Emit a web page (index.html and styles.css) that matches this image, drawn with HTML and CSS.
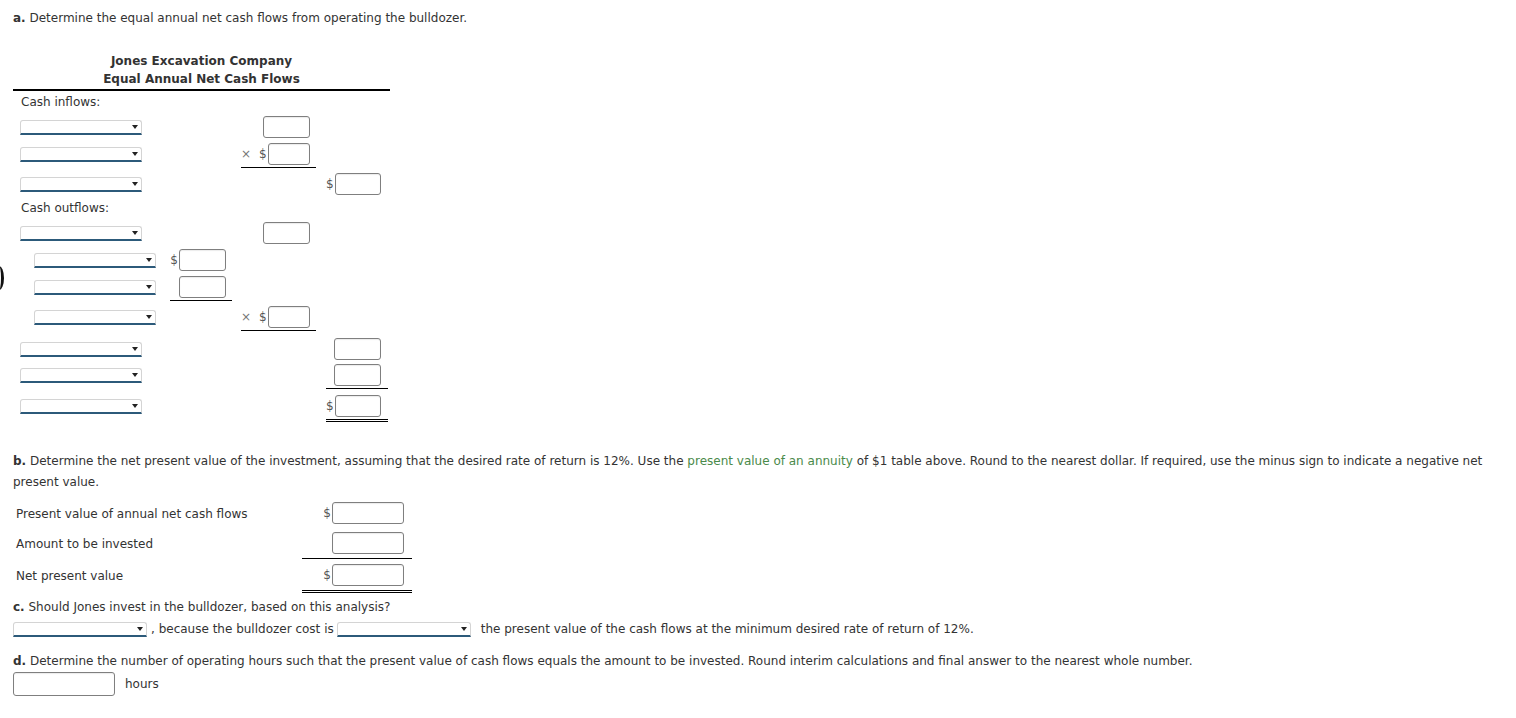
FILE: index.html
```html
<!DOCTYPE html>
<html>
<head>
<meta charset="utf-8">
<link rel="stylesheet" href="styles.css">
</head>
<body>
<div class="page">
  <span class="edge"></span>
  <p class="q qa"><b>a.</b> Determine the equal annual net cash flows from operating the bulldozer.</p>

  <div class="sheet">
    <div class="title">
      <div>Jones Excavation Company</div>
      <div>Equal Annual Net Cash Flows</div>
    </div>
    <div class="lbl">Cash inflows:</div>

    <div class="arow">
      <div class="c1"><span class="sel"></span></div>
      <div class="c3 cell"><span class="box"></span></div>
    </div>
    <div class="arow pb1">
      <div class="c1"><span class="sel"></span></div>
      <div class="c3 cell ul"><span class="x">×</span><span class="d">$</span><span class="box"></span></div>
    </div>
    <div class="arow pt4">
      <div class="c1"><span class="sel"></span></div>
      <div class="c4 cell"><span class="d">$</span><span class="box"></span></div>
    </div>

    <div class="lbl">Cash outflows:</div>

    <div class="arow">
      <div class="c1"><span class="sel"></span></div>
      <div class="c3 cell"><span class="box"></span></div>
    </div>
    <div class="arow">
      <div class="c1 ind"><span class="sel"></span></div>
      <div class="c2 cell"><span class="d">$</span><span class="box"></span></div>
    </div>
    <div class="arow pb1">
      <div class="c1 ind"><span class="sel"></span></div>
      <div class="c2 cell ul"><span class="box"></span></div>
    </div>
    <div class="arow pt4">
      <div class="c1 ind"><span class="sel"></span></div>
      <div class="c3 cell ul"><span class="x">×</span><span class="d">$</span><span class="box"></span></div>
    </div>
    <div class="arow pt5 pb1">
      <div class="c1"><span class="sel"></span></div>
      <div class="c4 cell"><span class="box"></span></div>
    </div>
    <div class="arow">
      <div class="c1"><span class="sel"></span></div>
      <div class="c4 cell ul"><span class="box"></span></div>
    </div>
    <div class="arow pt4">
      <div class="c1"><span class="sel"></span></div>
      <div class="c4 cell dul"><span class="d">$</span><span class="box"></span></div>
    </div>
  </div>

  <p class="q qb"><b>b.</b> Determine the net present value of the investment, assuming that the desired rate of return is 12%. Use the <span class="link">present value of an annuity</span> of $1 table above. Round to the nearest dollar. If required, use the minus sign to indicate a negative net present value.</p>

  <div class="npv">
    <div class="brow">
      <div class="blbl">Present value of annual net cash flows</div>
      <div class="bcell"><span class="d">$</span><span class="box wide"></span></div>
    </div>
    <div class="brow">
      <div class="blbl">Amount to be invested</div>
      <div class="bcell ul2"><span class="box wide"></span></div>
    </div>
    <div class="brow pt4">
      <div class="blbl">Net present value</div>
      <div class="bcell dul2"><span class="d">$</span><span class="box wide"></span></div>
    </div>
  </div>

  <p class="q qc"><b>c.</b> Should Jones invest in the bulldozer, based on this analysis?</p>
  <div class="crow">
    <span class="sel wsel"></span>
    <span class="ctext">, because the bulldozer cost is</span>
    <span class="sel wsel"></span>
    <span class="ctext tail">the present value of the cash flows at the minimum desired rate of return of 12%.</span>
  </div>

  <p class="q qd"><b>d.</b> Determine the number of operating hours such that the present value of cash flows equals the amount to be invested. Round interim calculations and final answer to the nearest whole number.</p>
  <div class="drow">
    <span class="box hbox"></span>
    <span class="hours">hours</span>
  </div>
</div>
</body>
</html>
```

FILE: styles.css
```css
* { box-sizing: border-box; }

html, body {
  margin: 0;
  padding: 0;
  background: #fff;
}

body {
  font-family: "DejaVu Sans", Verdana, sans-serif;
  font-size: 12px;
  color: #333;
}

.page {
  position: relative;
  padding: 8px 13px 20px 13px;
  width: 1516px;
}

.edge {
  position: absolute;
  left: -6px;
  top: 266px;
  width: 10px;
  height: 24px;
  border-right: 3px solid #111;
  border-radius: 50%;
}

.q {
  margin: 0;
  line-height: 21px;
}

.q b { color: #333; }

.link { color: #4a8a4a; }

/* ---------- part a ---------- */
.sheet {
  margin-top: 23px;
  width: 377px;
}

.title {
  text-align: center;
  font-weight: bold;
  line-height: 18px;
  border-bottom: 2px solid #000;
  padding-bottom: 1px;
}

.lbl {
  height: 22px;
  line-height: 22px;
  padding-left: 8px;
}

.arow {
  display: grid;
  grid-template-columns: 157px 62px 9px 75px 10px 62px;
  align-items: start;
  padding: 3px 0 2px 0;
}

.arow.pt4 { padding-top: 4px; }
.arow.pt5 { padding-top: 5px; }
.arow.pb1 { padding-bottom: 1px; }

.c1 {
  grid-column: 1;
  height: 22px;
  display: flex;
  align-items: center;
  padding-left: 7px;
}

.c1.ind { padding-left: 21px; }

.cell {
  height: 22px;
  box-sizing: content-box;
  display: flex;
  align-items: center;
  justify-content: flex-end;
}

.c2 { grid-column: 2; padding-right: 6px; }
.c3 { grid-column: 4; padding-right: 6px; }
.c4 { grid-column: 6; padding-right: 7px; }

.ul {
  padding-bottom: 2px;
  border-bottom: 1px solid #000;
}

.dul {
  padding-bottom: 2px;
  border-bottom: 3px double #000;
}

.sel {
  position: relative;
  display: inline-block;
  width: 122px;
  height: 15px;
  border: 1px solid #d4d4d4;
  border-bottom: 2px solid #2c5a7a;
  border-radius: 3px 3px 0 0;
  background: #fff;
}

.sel::after {
  content: "";
  position: absolute;
  right: 3px;
  top: 4px;
  border-left: 3.5px solid transparent;
  border-right: 3.5px solid transparent;
  border-top: 4px solid #222;
}

.box {
  display: inline-block;
  width: 47px;
  height: 22px;
  border: 1px solid #7f7f7f;
  border-radius: 3px;
  background: #fff;
  box-shadow: inset 0 1px 1px rgba(0,0,0,0.08);
}

.d {
  color: #555;
  margin-right: 1px;
}

.x {
  color: #777;
  margin-right: 8px;
}

/* ---------- part b ---------- */
.qb {
  margin-top: 27px;
}

.npv {
  padding-top: 6px;
}

.brow {
  display: grid;
  grid-template-columns: 289px 110px;
  align-items: start;
  padding: 3px 0 5px 0;
}

.brow.pt4 { padding-top: 4px; padding-bottom: 0; }

.blbl {
  height: 22px;
  line-height: 24px;
  padding-left: 3px;
}

.bcell {
  height: 22px;
  box-sizing: content-box;
  display: flex;
  align-items: center;
  justify-content: flex-end;
  padding-right: 8px;
}

.box.wide { width: 72px; }

.ul2 {
  padding-bottom: 4px;
  border-bottom: 1px solid #000;
}

.brow:has(.ul2) { padding-bottom: 1px; }

.dul2 {
  padding-bottom: 4px;
  border-bottom: 3px double #000;
}

/* ---------- part c ---------- */
.qc {
  margin-top: 4px;
}

.crow {
  display: flex;
  align-items: center;
  height: 22px;
}

.wsel {
  width: 134px;
}

.ctext {
  margin-left: 4px;
  margin-right: 3px;
}

.ctext.tail {
  margin-left: 10px;
}

/* ---------- part d ---------- */
.qd {
  margin-top: 11px;
}

.drow {
  display: flex;
  align-items: center;
  height: 24px;
}

.hbox {
  width: 102px;
  height: 24px;
}

.hours {
  margin-left: 10px;
}
```
